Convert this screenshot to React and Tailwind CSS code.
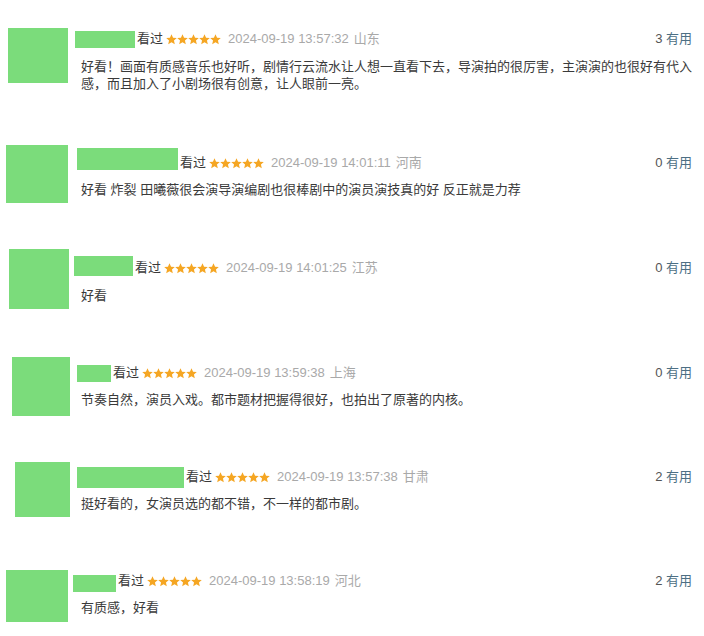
const rows = [
  {
    row: "h-[117px] pl-[8px]",
    avatar: "w-[60px] h-[55px]",
    body: "ml-[7px]",
    header: "h-[22px]",
    box: "w-[60px] h-[17px] mt-[3px]",
    content: "mt-[8px] ml-[6px]",
    date: "2024-09-19 13:57:32",
    place: "山东",
    useful: 3,
    text: "好看！画面有质感音乐也好听，剧情行云流水让人想一直看下去，导演拍的很厉害，主演演的也很好有代入感，而且加入了小剧场很有创意，让人眼前一亮。",
  },
  {
    row: "h-[104px] pl-[6px]",
    avatar: "w-[62px] h-[58px]",
    body: "ml-[9px]",
    header: "h-[36px]",
    box: "w-[101px] h-[22px] mt-[3px]",
    content: "mt-0 ml-[4px]",
    date: "2024-09-19 14:01:11",
    place: "河南",
    useful: 0,
    text: "好看 炸裂 田曦薇很会演导演编剧也很棒剧中的演员演技真的好 反正就是力荐",
  },
  {
    row: "h-[108px] pl-[9px]",
    avatar: "w-[60px] h-[60px]",
    body: "ml-[5px]",
    header: "h-[38px]",
    box: "w-[59px] h-[20px] mt-[7px]",
    content: "mt-0 ml-[7px]",
    date: "2024-09-19 14:01:25",
    place: "江苏",
    useful: 0,
    text: "好看",
  },
  {
    row: "h-[105px] pl-[12px]",
    avatar: "w-[58px] h-[59px]",
    body: "ml-[7px]",
    header: "h-[32px]",
    box: "w-[34px] h-[17px] mt-[8px]",
    content: "mt-[2px] ml-[4px]",
    date: "2024-09-19 13:59:38",
    place: "上海",
    useful: 0,
    text: "节奏自然，演员入戏。都市题材把握得很好，也拍出了原著的内核。",
  },
  {
    row: "h-[108px] pl-[15px]",
    avatar: "w-[55px] h-[55px]",
    body: "ml-[7px]",
    header: "h-[30px]",
    box: "w-[107px] h-[21px] mt-[5px]",
    content: "mt-[3px] ml-[4px]",
    date: "2024-09-19 13:57:38",
    place: "甘肃",
    useful: 2,
    text: "挺好看的，女演员选的都不错，不一样的都市剧。",
  },
  {
    row: "h-[66px] pl-[6px]",
    avatar: "w-[62px] h-[52px]",
    body: "ml-[5px]",
    header: "h-[22px]",
    box: "w-[43px] h-[17px] mt-[5px]",
    content: "mt-[7px] ml-[8px]",
    date: "2024-09-19 13:58:19",
    place: "河北",
    useful: 2,
    text: "有质感，好看",
  },
];

const Star = () => (
  <svg width="11" height="11" viewBox="1 1.5 22 21" className="shrink-0">
    <path
      d="M12 1.5l3.1 6.9 7.4.7-5.6 5 1.7 7.4L12 17.6l-6.6 3.9 1.7-7.4-5.6-5 7.4-.7z"
      fill="#f5a623"
    />
  </svg>
);

const Comment = ({ r }) => (
  <div className={`flex items-start pr-[12px] ${r.row}`}>
    <div className={`shrink-0 bg-[#7bdc7b] ${r.avatar}`} />
    <div className={`flex-1 min-w-0 ${r.body}`}>
      <div className={`flex items-center ${r.header}`}>
        <div className={`shrink-0 self-start bg-[#7bdc7b] ${r.box}`} />
        <span className="ml-[2px] text-[#3a3a3a]">看过</span>
        <span className="ml-[3px] flex">
          <Star />
          <Star />
          <Star />
          <Star />
          <Star />
        </span>
        <span className="ml-[7px] text-[#a9a9a9]">{r.date}</span>
        <span className="ml-[5px] text-[#a9a9a9]">{r.place}</span>
        <span className="ml-auto text-[#555]">
          {r.useful} <span className="text-[#4d6f84]">有用</span>
        </span>
      </div>
      <p className={`text-[#3a3a3a] leading-[17px] ${r.content}`}>{r.text}</p>
    </div>
  </div>
);

export default function App() {
  return (
    <div
      className="w-[704px] h-[636px] overflow-hidden bg-white pt-[28px] text-[13px]"
      style={{ fontFamily: '"Liberation Sans", "Noto Sans CJK SC", sans-serif' }}
    >
      {rows.map((r, i) => (
        <Comment key={i} r={r} />
      ))}
    </div>
  );
}
